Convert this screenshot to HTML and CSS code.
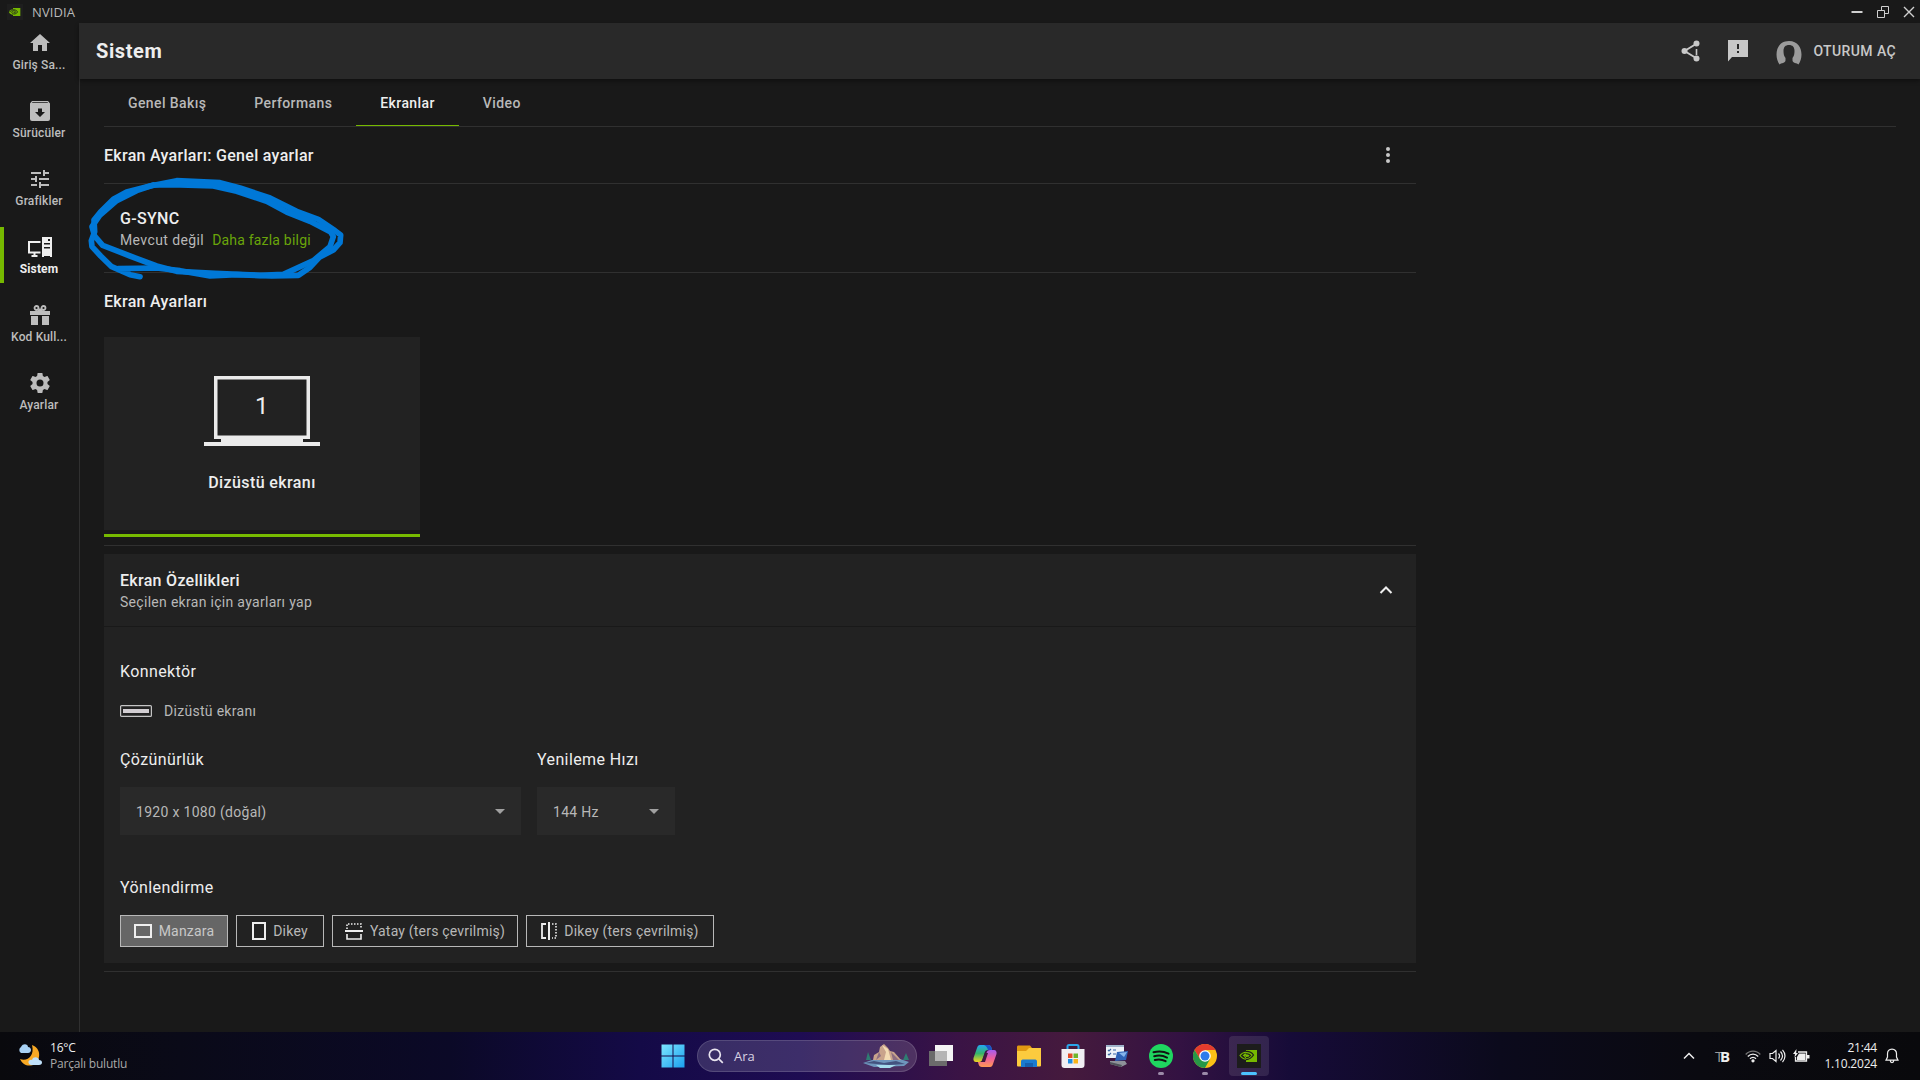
FILE: index.html
```html
<!DOCTYPE html>
<html lang="tr">
<head>
    <meta charset="UTF-8">
    <meta name="viewport" content="width=device-width, initial-scale=1.0">
    <title>NVIDIA</title>
    <link rel="stylesheet" href="styles.css">
</head>
<body>
    <div class="titlebar">
        <svg class="app-logo" width="16" height="16" viewBox="0 0 24 24">
            <rect width="24" height="24" fill="#1e1e1e"/>
            <path d="M9 6h11v12H9v-2c-3 0-6-2-6-4s3-4 6-4z" fill="#76b900"/>
            <path d="M4 12c3-5 10-4 12 0-3 4-8 4-9 0 2-3 5-2 6 0-1 2-3 1-3 0" fill="none" stroke="#1e1e1e" stroke-width="1.2"/>
        </svg>
        <span class="app-name">NVIDIA</span>
        <div class="window-buttons">
            <svg width="12" height="12" viewBox="0 0 12 12"><path d="M.5 6h11" stroke="#d0d0d0" stroke-width="2"/></svg>
            <svg width="12" height="12" viewBox="0 0 12 12" fill="none" stroke="#d0d0d0"><path d="M.5 4.500h7v7h-7zM4.500 4.500v-4h7v7h-4"/></svg>
            <svg width="12" height="12" viewBox="0 0 12 12"><path d="M1 1l10 10M11 1L1 11" stroke="#d0d0d0" stroke-width="1.400"/></svg>
        </div>
    </div>
    <div class="container">
        <div class="sidebar">
            <a class="menu-item">
                <svg width="24" height="24" viewBox="0 0 24 24"><path d="M10 20v-6h4v6h5v-8h3L12 3 2 12h3v8z"/></svg>
                <span>Giriş Sa...</span>
            </a>
            <a class="menu-item">
                <svg width="24" height="24" viewBox="0 0 24 24"><path fill-rule="evenodd" d="M4 2h16l2 2.500V20a2 2 0 0 1-2 2H4a2 2 0 0 1-2-2V4.500zM4.500 3.200h15l.6.9H3.900zM10 9.500V13H7l5 5 5-5h-3V9.500z"/></svg>
                <span>Sürücüler</span>
            </a>
            <a class="menu-item">
                <svg width="24" height="24" viewBox="0 0 24 24"><path d="M3 17v2h6v-2H3zM3 5v2h10V5H3zm10 16v-2h8v-2h-8v-2h-2v6h2zM7 9v2H3v2h4v2h2V9H7zm14 4v-2H11v2h10zm-6-4h2V7h4V5h-4V3h-2v6z"/></svg>
                <span>Grafikler</span>
            </a>
            <a class="menu-item active">
                <svg width="24" height="24" viewBox="0 0 24 24"><path fill-rule="evenodd" d="M14 2h10v20h-2v-1h-6v1h-2zM16 8h6v1.500h-6zM16 12h6v1.500h-6zM20 4h2v2h-2z"/><path d="M12.500 7H1v10.500h11.500M6.500 18v3M3.500 21h6" fill="none" stroke="#eee" stroke-width="2"/></svg>
                <span>Sistem</span>
            </a>
            <a class="menu-item">
                <svg width="24" height="24" viewBox="0 0 24 24"><path d="M2 8h20v4H2zM3 13h7v9H3zM14 13h7v9h-7z"/><path d="M10 12h4v5l-1 2-1-1-1 1-1-2z" fill="#191919"/><circle cx="8.500" cy="5" r="2" fill="none" stroke="#bdbdbd" stroke-width="1.800"/><circle cx="15.500" cy="5" r="2" fill="none" stroke="#bdbdbd" stroke-width="1.800"/><path d="M9 8l3-3 3 3z"/></svg>
                <span>Kod Kull...</span>
            </a>
            <a class="menu-item">
                <svg width="24" height="24" viewBox="0 0 24 24"><path d="M19.430 12.980c.04-.32.07-.64.07-.98s-.03-.66-.07-.98l2.110-1.650c.19-.15.24-.42.12-.64l-2-3.460c-.12-.22-.39-.3-.61-.22l-2.490 1c-.52-.4-1.080-.73-1.690-.98l-.38-2.650C14.460 2.180 14.250 2 14 2h-4c-.25 0-.46.18-.49.42l-.38 2.650c-.61.25-1.170.59-1.690.98l-2.490-1c-.23-.09-.49 0-.61.22l-2 3.460c-.13.22-.07.49.12.64l2.110 1.650c-.04.32-.07.65-.07.98s.03.66.07.98l-2.110 1.650c-.19.15-.24.42-.12.64l2 3.460c.12.22.39.3.61.22l2.490-1c.52.4 1.080.73 1.690.98l.38 2.650c.03.24.24.42.49.42h4c.25 0 .46-.18.49-.42l.38-2.650c.61-.25 1.170-.59 1.690-.98l2.490 1c.23.09.49 0 .61-.22l2-3.460c.12-.22.07-.49-.12-.64zM12 15.500a3.500 3.500 0 1 1 0-7 3.500 3.500 0 0 1 0 7z"/></svg>
                <span>Ayarlar</span>
            </a>
        </div>
        <div class="main">
            <div class="header">
                <h1>Sistem</h1>
                <div class="header-actions">
                    <svg class="share" width="20" height="22" viewBox="0 0 20 22"><path d="M3.500 11L15 4M3.500 11L15 18" fill="none" stroke="#c8c8c8" stroke-width="2"/><path d="M15.500 9v6" stroke="#c8c8c8" stroke-width="1.600"/><circle cx="3.500" cy="11" r="3"/><circle cx="15.500" cy="3.500" r="3"/><circle cx="15.500" cy="18.500" r="3"/></svg>
                    <svg class="feedback" width="20" height="22" viewBox="0 0 20 22"><path fill-rule="evenodd" d="M0 0h20v17H4l-4 4.500zM9 4h2v5H9zM9 11h2v2H9z"/></svg>
                    <svg class="avatar" width="26" height="26" viewBox="0 0 26 26"><path fill="#9b9b9b" d="M3.500 24.500C-2 17-.5 1 13 1s15 16 9.500 23.500c-1.500-1.500-6-1.500-6-4v-2.500c1.500-2 2-4 2-7 0-4-2-6-5.500-6s-5.500 2-5.500 6c0 3 .5 5 2 7v2.500c0 2.500-4.500 2.500-6 4z"/></svg>
                    <span class="login">OTURUM AÇ</span>
                </div>
            </div>
            <div class="tabs">
                <a class="tab">Genel Bakış</a>
                <a class="tab">Performans</a>
                <a class="tab active">Ekranlar</a>
                <a class="tab">Video</a>
            </div>
            <div class="content">
                <div class="section-head">
                    <h2>Ekran Ayarları: Genel ayarlar</h2>
                    <svg width="24" height="24" viewBox="0 0 24 24" fill="#c8c8c8"><circle cx="12" cy="6" r="2"/><circle cx="12" cy="12" r="2"/><circle cx="12" cy="18" r="2"/></svg>
                </div>
                <div class="gsync">
                    <h2>G-SYNC</h2>
                    <p><span class="gsync-state">Mevcut değil</span><a>Daha fazla bilgi</a></p>
                    <svg class="scribble" width="270" height="115" viewBox="0 0 810 345">
                        <path d="M180 320L150 314 95 290 62 258 36 230 34 212 44 185 42 150 62 125 100 88 140 66 210 48 290 32 420 38 480 54 570 84 650 124 715 148 765 182 782 195 780 218 760 240 718 262 690 292 655 316 575 318 470 314 390 318 300 302 230 294 115 296"/>
                        <path d="M220 45L300 45 400 48 470 64 560 94 620 126 690 154 752 186 760 200 750 230 700 272 610 313 540 316 405 310 290 304 230 288 150 258 68 226 44 198 36 170 60 135 110 92 170 62 220 45"/>
                    </svg>
                </div>
                <h2 class="displays-title">Ekran Ayarları</h2>
                <div class="display-list">
                    <div class="display-card">
                        <div class="laptop">
                            <svg width="116" height="70" viewBox="0 0 116 70"><path fill="#ebebeb" fill-rule="evenodd" d="M10 0h96v63h-7v3h17v4H0v-4h17v-3h-7zM13.500 3.500v56h89v-56z"/></svg>
                            <span>1</span>
                        </div>
                        <div class="display-name">Dizüstü ekranı</div>
                    </div>
                </div>
                <div class="panel">
                    <div class="panel-head">
                        <div>
                            <h2>Ekran Özellikleri</h2>
                            <p>Seçilen ekran için ayarları yap</p>
                        </div>
                        <svg width="14" height="10" viewBox="0 0 14 10"><path d="M1.500 8L7 2.500 12.500 8" fill="none" stroke="#eee" stroke-width="2"/></svg>
                    </div>
                    <div class="panel-body">
                        <h3>Konnektör</h3>
                        <div class="connector">
                            <svg width="32" height="12" viewBox="0 0 32 12"><rect x=".6" y=".6" width="30.800" height="10.800" rx="1" fill="none" stroke="#c4c4c4" stroke-width="1.200"/><rect x="3" y="4" width="26" height="4" fill="#d2ced2"/></svg>
                            <span>Dizüstü ekranı</span>
                        </div>
                        <div class="fields">
                            <div class="field resolution">
                                <h3>Çözünürlük</h3>
                                <div class="select"><span>1920 x 1080 (doğal)</span><i></i></div>
                            </div>
                            <div class="field refresh">
                                <h3>Yenileme Hızı</h3>
                                <div class="select"><span>144 Hz</span><i></i></div>
                            </div>
                        </div>
                        <h3 class="orientation-title">Yönlendirme</h3>
                        <div class="orientation">
                            <button class="landscape selected">
                                <svg width="18" height="14" viewBox="0 0 18 14"><path d="M1 1h16v12H1z"/></svg>
                                <span>Manzara</span>
                            </button>
                            <button class="portrait">
                                <svg width="14" height="18" viewBox="0 0 14 18"><path d="M1 1h12v16H1z"/></svg>
                                <span>Dikey</span>
                            </button>
                            <button class="landscape-flipped">
                                <svg width="18" height="18" viewBox="0 0 18 18"><path d="M0 9h18"/><path d="M2 12v5h14v-5" stroke-width="1.600"/><path d="M2 7V2h14v5" stroke-width="1.600" stroke-dasharray="1.500 1.500"/></svg>
                                <span>Yatay (ters çevrilmiş)</span>
                            </button>
                            <button class="portrait-flipped">
                                <svg width="16" height="18" viewBox="0 0 16 18"><path d="M8 0v18"/><path d="M5 2H1v14h4" stroke-width="1.800"/><path d="M11 2h4v14h-4" stroke-width="1.600" stroke-dasharray="1.500 1.500"/></svg>
                                <span>Dikey (ters çevrilmiş)</span>
                            </button>
                        </div>
                    </div>
                </div>
                <div class="end-line"></div>
            </div>
        </div>
    </div>
    <div class="taskbar">
        <div class="weather">
            <svg width="26" height="24" viewBox="0 0 26 24">
                <path d="M15 1c9 3 9 14 3 19-5 3-12 2-15-5 7 3 15-3 12-14z" fill="#f7a823"/>
                <path d="M4 9a3.500 3.500 0 0 1 0-6c2-4 7-3 7 0 4 0 4 6 0 6z" fill="#a9d2f5"/>
                <path d="M14 21c-4-1-3-6 1-5 1-4 7-3 7 0 4 0 4 5 0 5z" fill="#bfe0fa"/>
            </svg>
            <div class="weather-text"><div>16°C</div><div class="weather-desc">Parçalı bulutlu</div></div>
        </div>
        <div class="apps">
            <div class="app">
                <svg width="24" height="24" viewBox="0 0 24 24"><defs><linearGradient id="win" x1="0" y1="0" x2="1" y2="1"><stop offset="0" stop-color="#7de6ff"/><stop offset="1" stop-color="#1a9fee"/></linearGradient></defs><path d="M.5.500h11v11H.5zM12.500.500h11v11h-11zM.5 12.500h11v11H.5zM12.500 12.500h11v11h-11z" fill="url(#win)"/></svg>
            </div>
            <div class="search">
                <svg width="16" height="16" viewBox="0 0 16 16" fill="none" stroke="#e8e4ee" stroke-width="1.700"><circle cx="6.800" cy="6.800" r="5.500"/><path d="M10.800 10.800l4 4"/></svg>
                <span>Ara</span>
                <svg class="search-art" width="48" height="26" viewBox="0 0 48 26">
                    <path d="M1 20l9-3 28-1 9 3-5 4-30 1z" fill="#6f96bd"/>
                    <path d="M11 17l1-5 5-3 1-5 4-3 4 4 2 3 4 1 7 8z" fill="#c9a48c"/>
                    <path d="M20 2l4 7-2 8h7l-3-11z" fill="#f3dcb4"/>
                    <path d="M17 9l2 4-5 4M29 9l2 8h6z" fill="#8d6d80"/>
                    <path d="M3 20l9-2 10 2 12-2 9 3-16 1z" fill="#44537f"/>
                    <path d="M14 22h20l-6 3H18z" fill="#a6dcec"/>
                    <path d="M6 9l3 8H4zM44 10l3 7h-6z" fill="#2f7c72"/>
                </svg>
            </div>
            <div class="app">
                <svg width="24" height="24" viewBox="0 0 24 24"><path d="M0 7h18v15H0z" fill="#6b6b6b"/><path d="M6 1h18v16H6z" fill="#f4f4f4"/><path d="M6 7h12v10H6z" fill="#b5b5b5"/></svg>
            </div>
            <div class="app">
                <svg width="24" height="24" viewBox="0 0 24 24">
                    <defs><linearGradient id="cpa" x1="0" y1="0" x2="0" y2="1"><stop offset="0" stop-color="#24a7f2"/><stop offset=".5" stop-color="#35b46a"/><stop offset="1" stop-color="#f4d321"/></linearGradient><linearGradient id="cpb" x1="0" y1="0" x2="0" y2="1"><stop offset="0" stop-color="#a45cf0"/><stop offset=".5" stop-color="#ee5f9b"/><stop offset="1" stop-color="#ff9a52"/></linearGradient></defs>
                    <path d="M7 1h8c2 0 3 1 3.500 3l.5 2h-4c-2 0-3 1-3.500 3L9.500 15c-.5 2-1.500 3-3.500 3H3c-2 0-3-2-2.500-4L4 4c.5-2 1.500-3 3-3z" fill="url(#cpa)"/>
                    <path d="M17 23H9c-2 0-3-1-3.500-3L5 18h3c2 0 3-1 3.500-3l2-6c.5-2 1.500-3 3.500-3h4c2 0 3 2 2.500 4L20 20c-.5 2-1.500 3-3 3z" fill="url(#cpb)"/>
                    <path d="M11 1h4c2 0 3 1 3.500 3l.5 2h-4c-1-3-2-4-4-5z" fill="#1c50c8"/>
                    <path d="M10 14l2-5h3l-3 9H8c1-1 1.500-2 2-4z" fill="#421841"/>
                </svg>
            </div>
            <div class="app">
                <svg width="24" height="24" viewBox="0 0 24 24"><path d="M0 3c0-1 .5-1.500 1.500-1.500H13L15 4v7H0z" fill="#e19a12"/><path d="M0 7h9l3-3h12v17.500a1 1 0 0 1-1 1H1a1 1 0 0 1-1-1z" fill="#fccb3e"/><path d="M4 23v-5.500C4 16 5 15.500 6.500 15.500h11c1.500 0 2.500.5 2.500 2V23z" fill="#1a7bd0"/><path d="M8 19h8v4H8z" fill="#1560ae"/></svg>
            </div>
            <div class="app">
                <svg width="24" height="24" viewBox="0 0 24 24"><path d="M6.500 6V2.500C6.500 1.500 7 1 8 1h8c1 0 1.500.5 1.500 1.500V6" fill="none" stroke="#2aa6ea" stroke-width="2"/><path d="M.5 5h23v16a3 3 0 0 1-3 3h-17a3 3 0 0 1-3-3z" fill="#f1eff3"/><path d="M7 9.500h4.500V14H7z" fill="#e34c26"/><path d="M12.500 9.500H17V14h-4.500z" fill="#6fb52c"/><path d="M7 15h4.500v4.500H7z" fill="#1c8ee4"/><path d="M12.500 15H17v4.500h-4.500z" fill="#f9b51a"/></svg>
            </div>
            <div class="app">
                <svg width="24" height="24" viewBox="0 0 24 24"><path d="M1 1h18v13H1z" fill="#eef3f8"/><path d="M1 1h18v2H1z" fill="#9fb3ca"/><path d="M3 6l1 1 2-2M3 10l1 1 2-2M8 6h3M8 10h3" stroke="#3b66a5" stroke-width="1.200" fill="none"/><path d="M12 8l11-1-2 9-11 1z" fill="#2f64b8"/><path d="M14 9l8-1-3 5z" fill="#86b4ec"/><path d="M5 17h15l2 3-6 3-11-3z" fill="#8e9299"/><path d="M5 18l12 3-1 2-11-3z" fill="#4e5259"/></svg>
            </div>
            <div class="app running">
                <svg width="24" height="24" viewBox="0 0 24 24"><circle cx="12" cy="12" r="12" fill="#1fd660"/><path d="M4.500 8.300c5-1.500 10.500-1 15 1.400M5.200 12.300c4.500-1.300 9-.7 12.800 1.300M5.800 16c3.800-1 7.500-.6 10.800 1.200" fill="none" stroke="#121212" stroke-width="2" stroke-linecap="round"/></svg>
            </div>
            <div class="app running">
                <svg width="24" height="24" viewBox="0 0 24 24"><circle cx="12" cy="12" r="12" fill="#fbc116"/><path d="M12 12V6h10.400A12 12 0 0 0 1.600 6L7 15z" fill="#e33b2e"/><path d="M1.600 6A12 12 0 0 0 12 24l5-9-5-2-5 2z" fill="#279847"/><circle cx="12" cy="12" r="5.800" fill="#fff"/><circle cx="12" cy="12" r="4.500" fill="#2d7bea"/></svg>
            </div>
            <div class="app current">
                <svg width="24" height="24" viewBox="0 0 24 24"><path d="M0 0h24v24H0z" fill="#1c1c1c"/><path d="M9 6h11v12H9z" fill="#76b900"/><path d="M3 11.500c3-4 9-4.500 13-.5-3 5-9 6-13 .5zM6 12c2-3 6-3 7.500-.5-2 3-5 3-6 .5 1-1.500 3-1.500 3.500-.3" fill="none" stroke="#76b900" stroke-width="1.200"/><path d="M9 7.500c4-.3 6 1.500 7.500 3.500-2 3-4.500 4.500-7.500 4.600M9 9.800c2-.3 3.500.5 4.500 1.700-1.500 2-3 2.300-4.500 2" fill="none" stroke="#1c1c1c" stroke-width="1.200"/></svg>
            </div>
        </div>
        <div class="tray">
            <svg class="tray-up" width="12" height="8" viewBox="0 0 12 8"><path d="M1 6.500l5-5 5 5" fill="none" stroke="#eee" stroke-width="1.500"/></svg>
            <div class="tray-b"><span>T</span><b>B</b></div>
            <svg class="tray-wifi" width="16" height="14" viewBox="0 0 16 14" fill="none" stroke="#eee" stroke-width="1.300"><path d="M.7 5.500c4-4.500 10.600-4.500 14.600 0" stroke="#777"/><path d="M2.800 7.500c3-3.200 7.400-3.200 10.400 0M5 9.800c1.800-1.900 4.200-1.900 6 0"/><circle cx="8" cy="11.800" r="1" fill="#eee"/></svg>
            <svg class="tray-volume" width="17" height="16" viewBox="0 0 17 16" fill="none" stroke="#eee" stroke-width="1.200"><path d="M1 5.500h2.500L7 2.500v11L3.500 10.500H1zM9.500 5.500c1.300 1.500 1.300 3.500 0 5M11.500 3.500c2.500 2.800 2.500 6.200 0 9M13.500 1.800c3.300 3.700 3.300 8.700 0 12.400"/></svg>
            <svg class="tray-battery" width="17" height="14" viewBox="0 0 17 14"><path d="M5 3h8.500v9h-11V8" fill="none" stroke="#eee" stroke-width="1.300"/><path d="M6 4.500h6.500V11H4V8zM14 6h2.500v3.500H14z" fill="#eee"/><path d="M3.500 0L0 5h2l-.5 3.500L5 4H3.200z" fill="#eee"/></svg>
            <div class="clock"><div>21:44</div><div>1.10.2024</div></div>
            <svg class="tray-bell" width="14" height="16" viewBox="0 0 14 16" fill="none" stroke="#eee" stroke-width="1.200"><path d="M7 1.200c-3 0-4.500 2-4.500 4.600V9L1 12.200h12L11.500 9V5.800C11.500 3.200 10 1.200 7 1.200zM5.200 12.500c.2 2.700 3.400 2.700 3.600 0"/></svg>
        </div>
    </div>
</body>
</html>
```
FILE: styles.css
```css
* {
    box-sizing: border-box;
}
body {
    font-family: Roboto, "Liberation Sans", sans-serif;
    margin: 0;
    width: 1920px;
    height: 1080px;
    overflow: hidden;
    display: flex;
    flex-direction: column;
    background-color: #191919;
    color: #eee;
    font-size: 14px;
    letter-spacing: 0.3px;
}
h1, h2, h3, p {
    margin: 0;
}
svg {
    display: block;
    flex-shrink: 0;
}
.titlebar {
    height: 23px;
    display: flex;
    align-items: center;
    padding: 0 5px 0 7px;
    color: #b9b9b9;
}
.app-name {
    margin-left: 9px;
    font-family: "Open Sans", sans-serif;
    font-size: 13px;
    letter-spacing: 0.1px;
}
.window-buttons {
    margin-left: auto;
    display: flex;
    gap: 14px;
}
.container {
    display: flex;
    height: 1009px;
}
.sidebar {
    width: 80px;
    flex-shrink: 0;
    display: flex;
    flex-direction: column;
    gap: 12px;
    border-right: 1px solid #303030;
}
.menu-item {
    height: 56px;
    padding-top: 8px;
    display: flex;
    flex-direction: column;
    align-items: center;
    color: #bdbdbd;
    fill: #bdbdbd;
    font-size: 12px;
    font-weight: 500;
    letter-spacing: 0.15px;
    line-height: 21px;
    border-left: 4px solid transparent;
    padding-right: 3px;
}
.menu-item span {
    margin-right: 2px;
}
.menu-item.active {
    border-left-color: #76b900;
    color: #eee;
    fill: #eee;
    font-weight: 700;
}
.main {
    flex-grow: 1;
}
.header {
    height: 56px;
    margin-left: -1px;
    padding: 0 24px 0 17px;
    background-color: #292929;
    box-shadow: 0 2px 4px rgba(0, 0, 0, 0.4);
    display: flex;
    align-items: center;
    justify-content: space-between;
}
.header h1 {
    font-size: 20px;
    font-weight: 700;
    letter-spacing: 0.6px;
}
.header-actions {
    display: flex;
    align-items: center;
    fill: #c8c8c8;
    color: #c8c8c8;
}
.feedback {
    margin-left: 27px;
}
.avatar {
    margin: 3px 11px 0 28px;
}
.login {
    font-weight: 500;
    letter-spacing: 0.4px;
}
.tabs {
    margin: 0 24px;
    height: 48px;
    display: flex;
    border-bottom: 1px solid #303030;
}
.tab {
    padding: 0 24px;
    line-height: 48px;
    height: 47px;
    font-weight: 500;
    letter-spacing: 0.4px;
    color: #b8b8b8;
}
.tab.active {
    color: #eee;
    border-bottom: 1px solid #76b900;
}
.content {
    width: 1312px;
    margin-left: 24px;
}
h2, h3 {
    padding-top: 2px;
    font-size: 16px;
    line-height: 22px;
}
h2 {
    font-weight: 500;
}
h3 {
    font-weight: 400;
    letter-spacing: 0.4px;
}
.section-head {
    height: 57px;
    padding-right: 16px;
    display: flex;
    align-items: center;
    justify-content: space-between;
    border-bottom: 1px solid #303030;
}
.gsync {
    position: relative;
    height: 89px;
    padding: 22px 16px 0;
    border-bottom: 1px solid #303030;
}
.gsync p {
    display: flex;
    gap: 8px;
    line-height: 20px;
    color: #b8b8b8;
}
.gsync-state {
    letter-spacing: 0.4px;
}
.gsync a {
    color: #6aa50a;
    letter-spacing: 0.2px;
}
/* pen mark around the G-SYNC row */
.scribble {
    position: absolute;
    left: -24px;
    top: -14px;
    fill: none;
    stroke: #0078d7;
    stroke-width: 17;
    stroke-linecap: round;
    stroke-linejoin: round;
}
.displays-title {
    line-height: 54px;
    margin-bottom: 8px;
}
.display-list {
    height: 209px;
    border-bottom: 1px solid #303030;
}
.display-card {
    width: 316px;
    height: 193px;
    padding-top: 39px;
    background-color: #222;
    box-shadow: 0 4px #191919, 0 7px #76b900;
    display: flex;
    flex-direction: column;
    align-items: center;
}
.laptop {
    display: grid;
}
.laptop svg, .laptop span {
    grid-area: 1 / 1;
}
.laptop span {
    text-align: center;
    font-size: 24px;
    line-height: 60px;
}
.display-name {
    margin-top: 24px;
    font-size: 16px;
    font-weight: 500;
    line-height: 26px;
    letter-spacing: 0.4px;
}
.panel {
    margin-top: 8px;
    background-color: #222;
}
.panel-head {
    height: 73px;
    padding: 14px 23px 0 16px;
    display: flex;
    justify-content: space-between;
    border-bottom: 1px solid #191919;
}
.panel-head svg {
    margin-top: 17px;
}
.panel-head p {
    line-height: 20px;
    color: #b8b8b8;
}
.panel-body {
    padding: 32px 16px 16px;
}
.connector {
    margin-top: 18px;
    display: flex;
    align-items: center;
    gap: 12px;
    line-height: 20px;
    color: #b8b8b8;
}
.fields {
    margin-top: 26px;
    display: flex;
    gap: 16px;
}
.resolution {
    width: 401px;
}
.refresh {
    width: 138px;
}
.select {
    margin-top: 16px;
    height: 48px;
    padding: 0 16px;
    background-color: #292929;
    color: #b8b8b8;
    display: flex;
    align-items: center;
    justify-content: space-between;
}
.select span {
    padding-top: 2px;
}
.select i {
    border: 5px solid transparent;
    border-top-color: #a0a0a0;
    border-bottom: 0;
}
.orientation-title {
    margin: 40px 0 16px;
}
.orientation {
    display: flex;
    gap: 8px;
}
.orientation button {
    height: 32px;
    padding: 0;
    display: flex;
    align-items: center;
    justify-content: center;
    gap: 7px;
    background: none;
    border: 1px solid #b8b8b8;
    color: #b8b8b8;
    font: inherit;
    letter-spacing: 0.2px;
}
.orientation svg {
    fill: none;
    stroke: #eee;
    stroke-width: 2;
}
.orientation .selected {
    background-color: #666;
    color: #c8c8c8;
}
.landscape {
    width: 108px;
}
.portrait {
    width: 88px;
}
.landscape-flipped {
    width: 186px;
}
.portrait-flipped {
    width: 188px;
}
.end-line {
    margin-top: 8px;
    height: 1px;
    background-color: #303030;
}
.taskbar {
    height: 48px;
    display: grid;
    grid-template-columns: 1fr auto 1fr;
    align-items: center;
    padding-left: 2px;
    background: linear-gradient(90deg, #09090d 0, #0a0a18 180px, #0b0927 450px, #140a47 640px, #1e0c52 800px, #3a1345 960px, #451a3d 1070px, #331242 1180px, #160b38 1290px, #0b0a1c 1500px, #0a0a10 1700px, #09090c 1920px);
    font-family: "Open Sans", "Noto Sans", sans-serif;
    font-size: 12px;
    line-height: 16px;
    letter-spacing: -0.2px;
    color: #eee;
}
.weather {
    display: flex;
    align-items: center;
    padding-left: 15px;
    gap: 7px;
}
.weather-desc {
    color: #a9a9a9;
}
.apps {
    display: flex;
    gap: 4px;
}
.app {
    position: relative;
    width: 40px;
    height: 40px;
    display: flex;
    align-items: center;
    justify-content: center;
}
.app.current {
    border-radius: 4px;
    background-color: rgba(255, 255, 255, 0.1);
}
.app.running::after, .app.current::after {
    content: "";
    position: absolute;
    bottom: 1px;
    left: 17px;
    width: 6px;
    height: 3px;
    border-radius: 2px;
    background-color: #9c8ba8;
}
.app.current::after {
    left: 12px;
    width: 16px;
    background-color: #4cc2ff;
}
.search {
    width: 220px;
    height: 32px;
    margin-top: 4px;
    padding: 0 6px 0 10px;
    display: flex;
    align-items: center;
    gap: 10px;
    border: 1px solid rgba(255, 255, 255, 0.14);
    border-radius: 16px;
    background-color: rgba(255, 255, 255, 0.14);
    font-size: 13px;
    letter-spacing: 0;
    color: #d9d2e2;
}
.search-art {
    margin-left: auto;
}
.tray {
    display: flex;
    align-items: center;
    justify-content: flex-end;
    padding-right: 21px;
}
.tray-b {
    margin-left: 20px;
    width: 14px;
    font-size: 15px;
    display: flex;
}
.tray-b span {
    width: 5px;
    color: #999;
}
.tray-wifi {
    margin-left: 16px;
}
.tray-volume {
    margin-left: 8px;
}
.tray-battery {
    margin-left: 7px;
}
.clock {
    width: 58px;
    margin-left: 9px;
    text-align: right;
}
.tray-bell {
    margin-left: 8px;
}
```
